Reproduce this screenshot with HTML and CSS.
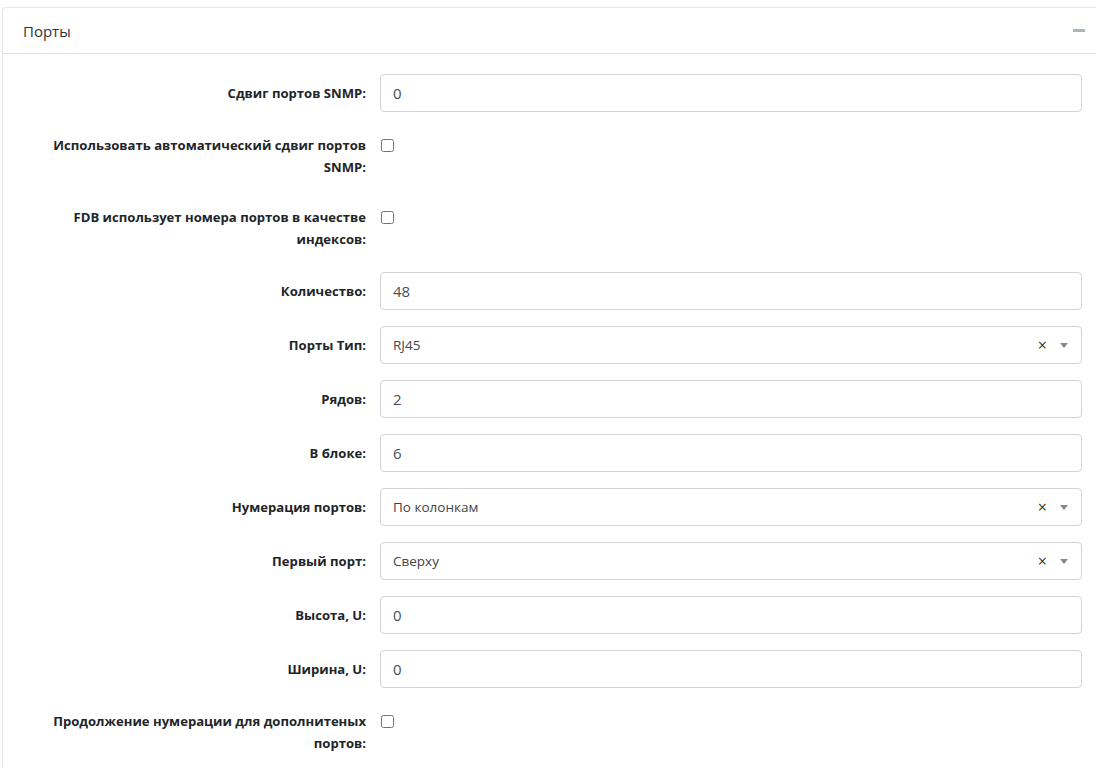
FILE: index.html
```html
<!DOCTYPE html>
<html lang="ru">
<head>
  <meta charset="UTF-8">
  <meta name="viewport" content="width=device-width, initial-scale=1.0">
  <title>Порты</title>

  <link rel="stylesheet" href="styles.css">
</head>

<body>
  <div class="card">
    <div class="card-header">
      <span class="card-title">Порты</span>
      <button class="collapse-btn" aria-label="Свернуть"><span class="minus"></span></button>
    </div>

    <div class="card-body">
      <div class="form-row">
        <label class="form-label">Сдвиг портов SNMP:</label>
        <input class="form-input" type="text" value="0">
      </div>

      <div class="form-row form-row-check">
        <label class="form-label">Использовать автоматический сдвиг портов SNMP:</label>
        <input class="form-check" type="checkbox">
      </div>

      <div class="form-row form-row-check">
        <label class="form-label">FDB использует номера портов в качестве индексов:</label>
        <input class="form-check" type="checkbox">
      </div>

      <div class="form-row">
        <label class="form-label">Количество:</label>
        <input class="form-input" type="text" value="48">
      </div>

      <div class="form-row">
        <label class="form-label">Порты Тип:</label>
        <div class="select">
          <span class="select-value">RJ45</span>
          <span class="select-clear">×</span>
          <span class="select-arrow"></span>
        </div>
      </div>

      <div class="form-row">
        <label class="form-label">Рядов:</label>
        <input class="form-input" type="text" value="2">
      </div>

      <div class="form-row">
        <label class="form-label">В блоке:</label>
        <input class="form-input" type="text" value="6">
      </div>

      <div class="form-row">
        <label class="form-label">Нумерация портов:</label>
        <div class="select">
          <span class="select-value">По колонкам</span>
          <span class="select-clear">×</span>
          <span class="select-arrow"></span>
        </div>
      </div>

      <div class="form-row">
        <label class="form-label">Первый порт:</label>
        <div class="select">
          <span class="select-value">Сверху</span>
          <span class="select-clear">×</span>
          <span class="select-arrow"></span>
        </div>
      </div>

      <div class="form-row">
        <label class="form-label">Высота, U:</label>
        <input class="form-input" type="text" value="0">
      </div>

      <div class="form-row">
        <label class="form-label">Ширина, U:</label>
        <input class="form-input" type="text" value="0">
      </div>

      <div class="form-row form-row-check">
        <label class="form-label">Продолжение нумерации для дополнитеных портов:</label>
        <input class="form-check" type="checkbox">
      </div>
    </div>
  </div>
</body>
</html>
```

FILE: styles.css
```css
* {
  box-sizing: border-box;
  margin: 0;
  padding: 0;
}

html {
  overflow: hidden;
}

body {
  font-family: "Open Sans", "Noto Sans", sans-serif;
  color: #212529;
  background: #fff;
}

/* Card */
.card {
  margin: 7px 0 0 2px;
  width: 1110px;
  border: 1px solid #e6e9ec;
  border-radius: 4px;
  background: #fff;
  box-shadow: 0 0 2px rgba(0, 0, 0, 0.06);
}

.card-header {
  display: flex;
  align-items: center;
  justify-content: space-between;
  height: 46px;
  padding: 0 26px 0 20px;
  border-bottom: 1px solid #dfe3e7;
}

.card-title {
  font-size: 15px;
  color: #333;
}

.collapse-btn {
  border: 0;
  background: none;
  width: 12px;
  height: 12px;
  display: flex;
  align-items: center;
}

.minus {
  display: block;
  width: 12px;
  height: 3px;
  background: #adb5bd;
}

.card-body {
  padding: 20px 27px 20px 0;
}

/* Form rows */
.form-row {
  display: grid;
  grid-template-columns: 363px 1fr;
  column-gap: 14px;
  align-items: start;
  margin-bottom: 16px;
}

.form-label {
  font-size: 13.1px;
  font-weight: 700;
  line-height: 22px;
  text-align: right;
  padding: 8px 0 0 30px;
}

.form-row-check .form-label {
  padding-top: 6px;
  padding-bottom: 6px;
}

.form-input,
.select {
  height: 38px;
  width: 702px;
  border: 1px solid #ced4da;
  border-radius: 4px;
  background: #fff;
  padding: 0 12px;
  font-family: inherit;
  font-size: 15px;
  color: #495057;
  outline: none;
}

.form-check {
  width: 13px;
  height: 13px;
  margin: 11px 0 0 1px;
}

/* Select2-like dropdown */
.select {
  display: flex;
  align-items: center;
}

.select-value {
  flex: 1;
  font-size: 13.5px;
  color: #444;
}

.select-clear {
  font-size: 16px;
  color: #333;
  margin-right: 13px;
}

.select-arrow {
  width: 0;
  height: 0;
  border-left: 4px solid transparent;
  border-right: 4px solid transparent;
  border-top: 5px solid #888;
  margin-right: 1px;
}
```
